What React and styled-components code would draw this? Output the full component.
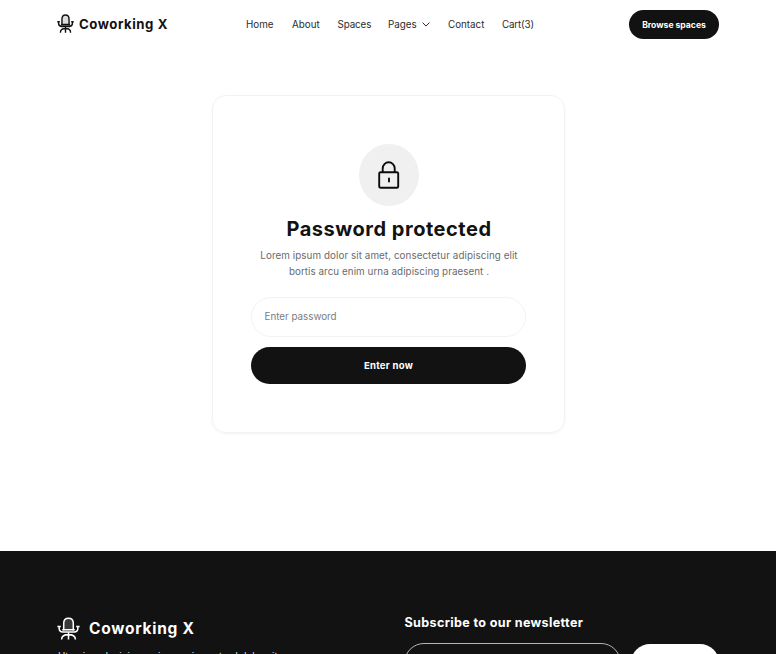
import React from 'react';
import styled, { createGlobalStyle } from 'styled-components';

const Global = createGlobalStyle`
  * { box-sizing: border-box; }
  html, body { margin: 0; background: #fff; }
  body { font-family: Inter, "Liberation Sans", sans-serif; color: #121212; overflow: hidden; }
`;
const Page = styled.div`
  height: 654px;
  overflow: hidden;
  display: flex;
  flex-direction: column;
`;
const Header = styled.header`
  height: 48px;
  flex: none;
  padding: 1px 57px 0;
  display: grid;
  grid-template-columns: 189px 1fr 90px;
  align-items: center;
`;
const Brand = styled.a`
  display: flex;
  align-items: center;
  gap: ${p => p.$gap}px;
  margin-bottom: ${p => p.$lift || 0}px;
  color: ${p => p.$color};
  font-size: ${p => p.$size}px;
  font-weight: 700;
  line-height: 20px;
  letter-spacing: ${p => p.$track}px;
  white-space: nowrap;
`;
const Nav = styled.nav`
  display: flex;
  align-items: center;
`;
const NavLink = styled.a`
  display: flex;
  align-items: center;
  gap: 5px;
  width: ${p => p.$w}px;
  font-size: 9.8px;
  line-height: 16px;
  letter-spacing: ${p => p.$track || 0}px;
  color: #2b2b2b;
  white-space: nowrap;
`;
const BrowseButton = styled.button`
  height: 29px;
  padding: 0;
  border: 0;
  border-radius: 15px;
  background: #121212;
  color: #fff;
  font: 700 8.6px/16px Inter, sans-serif;
  white-space: nowrap;
`;
const Main = styled.main`
  height: 503px;
  flex: none;
  padding-top: 47px;
  display: flex;
  justify-content: center;
  align-items: flex-start;
`;
const Card = styled.section`
  width: 353px;
  height: 338px;
  padding: 48px 38px 0;
  border: 1px solid #f3f3f3;
  border-radius: 14px;
  box-shadow: 0 1px 3px rgba(0, 0, 0, 0.05);
  display: flex;
  flex-direction: column;
  align-items: center;
`;
const IconDisc = styled.div`
  width: 60px;
  height: 62px;
  flex: none;
  margin-left: 1px;
  border-radius: 50%;
  background: #f0f0f0;
  display: grid;
  place-items: center;
`;
const Title = styled.h1`
  margin: 9px 0 5px 2px;
  font-size: 20px;
  font-weight: 700;
  line-height: 28px;
  letter-spacing: 0.52px;
  white-space: nowrap;
`;
const Description = styled.p`
  margin: 0 0 0 2px;
  color: #6a6a6a;
  font-size: 9.8px;
  line-height: 16px;
  text-align: center;
  white-space: nowrap;
`;
const Line = styled.span`
  display: block;
  letter-spacing: ${p => p.$track}px;
`;
const Form = styled.form`
  width: 275px;
  margin-top: 17px;
  display: flex;
  flex-direction: column;
  gap: 10px;
`;
const PasswordInput = styled.input`
  height: 40px;
  padding: 0 13px 2px;
  border: 1px solid #f3f3f3;
  border-radius: 20px;
  background: transparent;
  outline: 0;
  font: 400 9.8px/16px Inter, sans-serif;
  &::placeholder { color: #7c7c7c; opacity: 1; }
`;
const SubmitButton = styled.button`
  height: 37px;
  padding: 0 0 0 1px;
  border: 0;
  border-radius: 18.5px;
  background: #121212;
  color: #fff;
  font: 700 9.6px/16px Inter, sans-serif;
  letter-spacing: 0.25px;
`;
const Footer = styled.footer`
  height: 103px;
  flex: none;
  overflow: hidden;
  background: #121212;
  color: #fff;
  padding: 0 57px;
  display: grid;
  grid-template-columns: 347px 1fr;
`;
const FooterAbout = styled.div`
  padding-top: 66px;
`;
const FooterText = styled.p`
  margin: 9px 0 0 1px;
  font-size: 9.8px;
  line-height: 16px;
  color: #dcdcdc;
  white-space: nowrap;
`;
const Newsletter = styled.div`
  padding-top: 62px;
`;
const NewsletterTitle = styled.h2`
  margin: 0 0 10px 0.5px;
  font-size: 12.6px;
  font-weight: 700;
  line-height: 20px;
  letter-spacing: 0.34px;
  white-space: nowrap;
`;
const SignupRow = styled.div`
  display: flex;
  align-items: center;
  gap: 10px;
`;
const EmailInput = styled.input`
  width: 217px;
  height: 40px;
  border: 1px solid #b5b5b5;
  border-radius: 20px;
  background: transparent;
`;
const SubscribeButton = styled.button`
  width: 88px;
  height: 38px;
  border: 0;
  border-radius: 19px;
  background: #fff;
`;

const Chair = ({ w, h, stroke, fill }) => (
  <svg width={w} height={h} viewBox="0 0 24 24" preserveAspectRatio="none" fill="none" stroke="currentColor" strokeWidth={stroke} strokeLinejoin="round">
    <path d="M7 14V6.5C7 3 9 1.2 12 1.2S17 3 17 6.5V14" fill={fill} />
    <path d="M.4 9.8H4M20 9.8h3.6M2.2 10v1.5C2.2 14.2 3.6 15.6 6 15.6h12c2.4 0 3.8-1.4 3.8-4.1V10M5.5 13.2h13" />
    <path d="M12 16v7.6M4.8 23.6c0-3.6 2.8-5.2 7.2-5.2s7.2 1.6 7.2 5.2" />
  </svg>
);

const Lock = () => (
  <svg width="22" height="28" viewBox="0 0 22 28" fill="none" stroke="#0c0c0c" strokeWidth="1.9" strokeLinecap="round">
    <rect x="1.2" y="11.2" width="19" height="15.6" rx="1.4" />
    <path d="M4.7 11V7.3a6 6 0 0 1 12 0V11M11 17.5v3" />
  </svg>
);

const Chevron = () => (
  <svg width="8" height="5" viewBox="0 0 8 5" fill="none" stroke="#2b2b2b" strokeWidth="1">
    <path d="M.6.6 4 4.1 7.4.6" />
  </svg>
);

export default function App() {
  return (
    <Page>
      <Global />
      <Header>
        <Brand $gap={5} $color="#121212" $size={13.2} $track={0.54} $lift={2}>
          <Chair w={17} h={19} stroke={2} fill="#ddd" />
          Coworking X
        </Brand>
        <Nav>
          <NavLink $w={46}>Home</NavLink>
          <NavLink $w={45.5}>About</NavLink>
          <NavLink $w={50.5} $track={-0.1}>Spaces</NavLink>
          <NavLink $w={60}>Pages <Chevron /></NavLink>
          <NavLink $w={54}>Contact</NavLink>
          <NavLink $w={34} $track={-0.15}>Cart(3)</NavLink>
        </Nav>
        <BrowseButton>Browse spaces</BrowseButton>
      </Header>
      <Main>
        <Card>
          <IconDisc><Lock /></IconDisc>
          <Title>Password protected</Title>
          <Description>
            <Line $track={0.08}>Lorem ipsum dolor sit amet, consectetur adipiscing elit</Line>
            <Line $track={0.06}>bortis arcu enim urna adipiscing praesent .</Line>
          </Description>
          <Form onSubmit={e => e.preventDefault()}>
            <PasswordInput type="password" placeholder="Enter password" />
            <SubmitButton>Enter now</SubmitButton>
          </Form>
        </Card>
      </Main>
      <Footer>
        <FooterAbout>
          <Brand $gap={9} $color="#fff" $size={15.5} $track={0.74}>
            <Chair w={23} h={23} stroke={1.6} fill="#3a3a3a" />
            Coworking X
          </Brand>
          <FooterText>Ut enim ad minim veniam, quis nostrud dolor sit</FooterText>
        </FooterAbout>
        <Newsletter>
          <NewsletterTitle>Subscribe to our newsletter</NewsletterTitle>
          <SignupRow>
            <EmailInput aria-label="Email" />
            <SubscribeButton aria-label="Subscribe" />
          </SignupRow>
        </Newsletter>
      </Footer>
    </Page>
  );
}
